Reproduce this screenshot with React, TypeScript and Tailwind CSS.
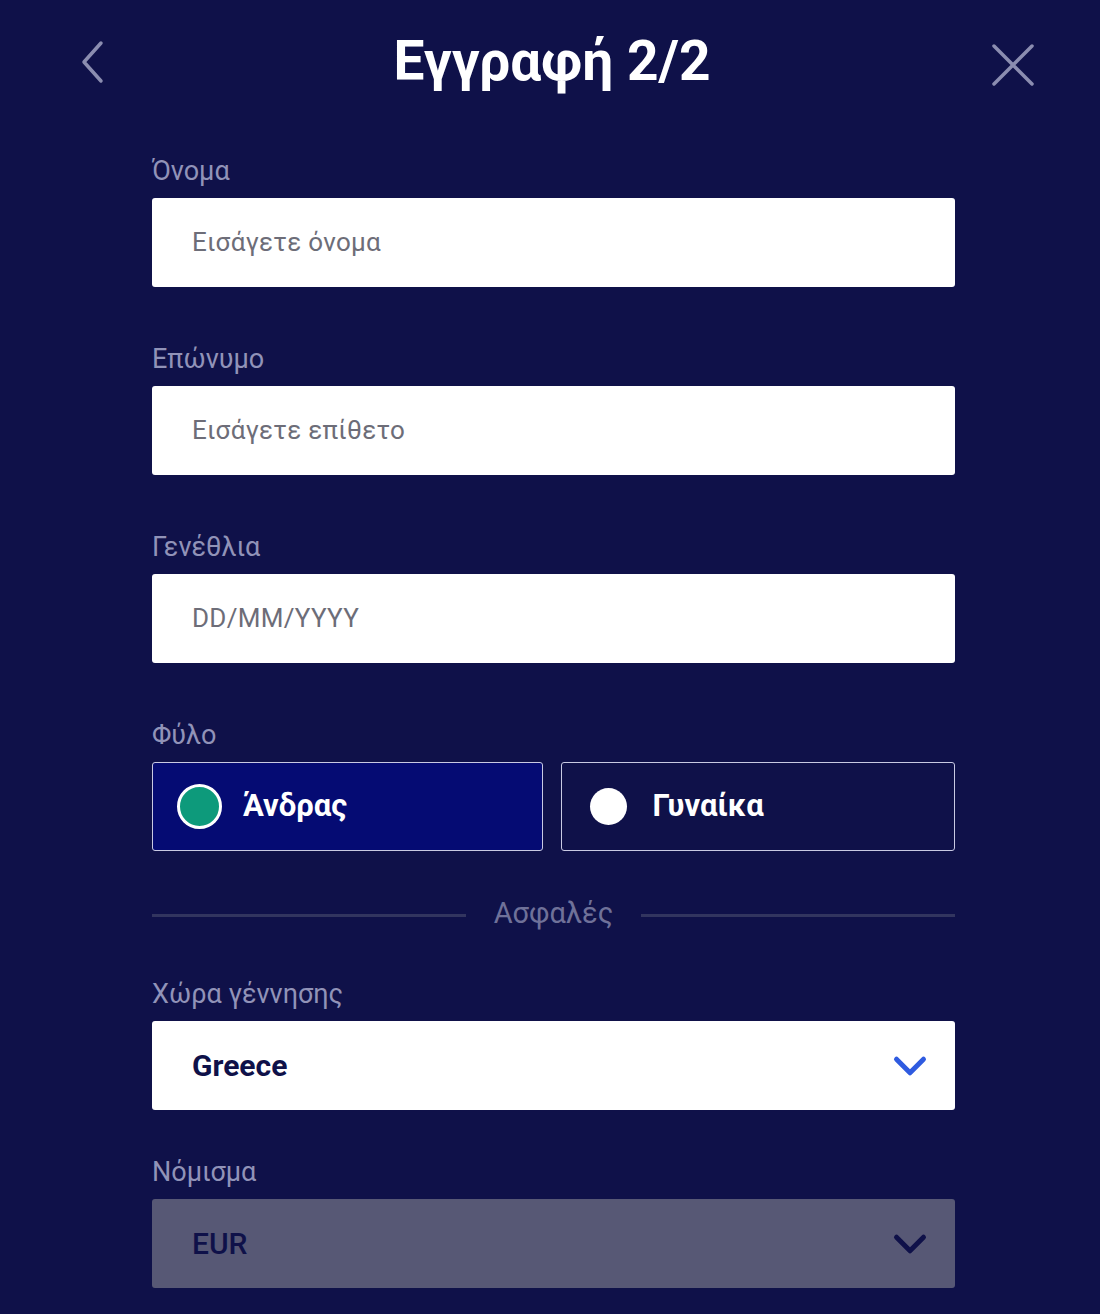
import { ChevronDown } from 'lucide-react';

const font = { fontFamily: 'Roboto, "Noto Sans", sans-serif' };

function Field({ label, placeholder }: { label: string; placeholder: string }) {
  return (
    <div className="mb-[57px]">
      <div className="text-[27px] leading-[30px] text-[#9193b8] mb-3">{label}</div>
      <div className="h-[89px] bg-white rounded-[3px] flex items-center pl-10 text-[26px] text-[#6d6d78] tracking-[0.3px]">
        {placeholder}
      </div>
    </div>
  );
}

function Radio({ label, selected }: { label: string; selected?: boolean }) {
  return (
    <div
      className={`flex-1 h-[89px] rounded-[3px] border border-[#c9cae3] flex items-center ${
        selected ? 'bg-[#050b73] pl-6' : 'bg-transparent pl-[28px]'
      }`}
    >
      {selected ? (
        <span className="w-[45px] h-[45px] rounded-full bg-[#0d9a7b] border-[3px] border-white" />
      ) : (
        <span className="w-[37px] h-[37px] rounded-full bg-white" />
      )}
      <span className={`text-[31px] font-bold text-white ${selected ? 'ml-[21px]' : 'ml-[26px]'}`}>{label}</span>
    </div>
  );
}

export default function App() {
  return (
    <div className="w-[1100px] h-[1314px] bg-[#0f1149] overflow-hidden" style={font}>
      {/* Header */}
      <div className="relative h-[124px] flex items-center justify-center">
        <button className="absolute left-[80px] top-[40px]">
          <svg width="26" height="44" viewBox="0 0 26 44" fill="none">
            <path d="M21 3 L4 22 L21 41" stroke="#8b8db0" strokeWidth="3.5" strokeLinecap="round" strokeLinejoin="round" />
          </svg>
        </button>
        <h1 className="text-[55px] font-bold text-white -mt-[2px] ml-[4px]">Εγγραφή 2/2</h1>
        <button className="absolute left-[990px] top-[42px]">
          <svg width="46" height="46" viewBox="0 0 46 46" fill="none">
            <path d="M4 4 L42 42 M42 4 L4 42" stroke="#8b8db0" strokeWidth="3.5" strokeLinecap="round" />
          </svg>
        </button>
      </div>

      {/* Form */}
      <div className="ml-[152px] w-[803px] mt-[32px]">
        <Field label="Όνομα" placeholder="Εισάγετε όνομα" />
        <Field label="Επώνυμο" placeholder="Εισάγετε επίθετο" />
        <Field label="Γενέθλια" placeholder="DD/MM/YYYY" />

        <div className="text-[27px] leading-[30px] text-[#9193b8] mb-3">Φύλο</div>
        <div className="flex gap-[18px]">
          <Radio label="Άνδρας" selected />
          <Radio label="Γυναίκα" />
        </div>

        <div className="flex items-center h-[128px]">
          <div className="flex-1 h-[3px] bg-[#32355f]" />
          <span className="px-7 text-[29px] text-[#6f7199] -mt-[2px]">Ασφαλές</span>
          <div className="flex-1 h-[3px] bg-[#32355f]" />
        </div>

        <div className="mb-[47px]">
          <div className="text-[27px] leading-[30px] text-[#9193b8] mb-3">Χώρα γέννησης</div>
          <div className="h-[89px] bg-white rounded-[3px] flex items-center justify-between pl-10 pr-[18px]">
            <span className="text-[30px] font-bold text-[#0f1149]">Greece</span>
            <ChevronDown className="w-[54px] h-[54px] text-[#2f5be0]" strokeWidth={2.2} />
          </div>
        </div>

        <div>
          <div className="text-[27px] leading-[30px] text-[#9193b8] mb-3">Νόμισμα</div>
          <div className="h-[89px] bg-[#575875] rounded-[3px] flex items-center justify-between pl-10 pr-[18px]">
            <span className="text-[30px] font-medium text-[#0f1149]">EUR</span>
            <ChevronDown className="w-[54px] h-[54px] text-[#0f1149]" strokeWidth={2.2} />
          </div>
        </div>
      </div>
    </div>
  );
}
